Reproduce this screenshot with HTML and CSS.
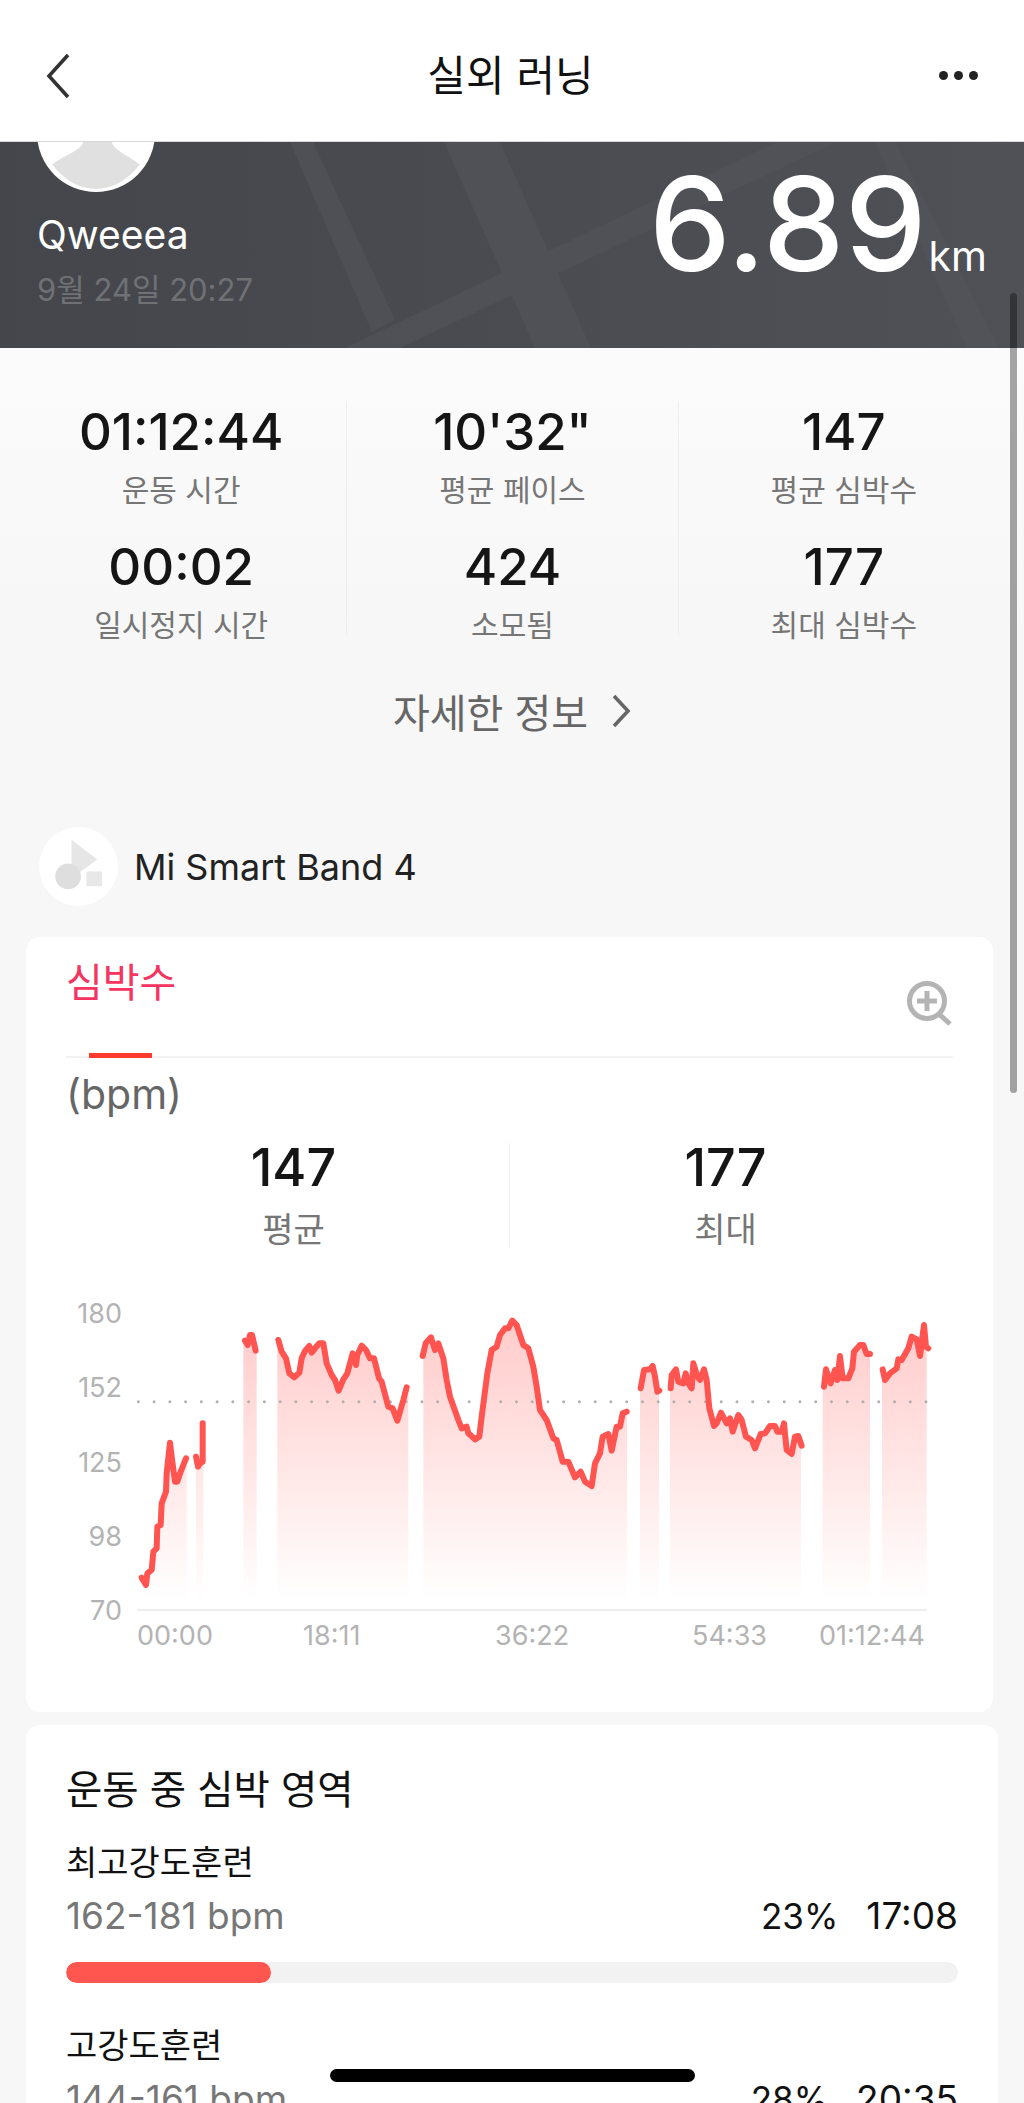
FILE: index.html
```html
<!DOCTYPE html>
<html lang="ko">
<head>
<meta charset="utf-8">
<title>실외 러닝</title>
<link rel="stylesheet" href="styles.css">
</head>
<body>
<div class="page">
  <nav class="nav">
    <svg class="nav-back" viewBox="0 0 26 46"><path d="M23 2 L4 23 L23 44" /></svg>
    <h1 class="nav-title">실외 러닝</h1>
    <div class="nav-more"><i></i><i></i><i></i></div>
  </nav>

  <header class="hero">
    <svg class="hero-map" viewBox="0 0 1024 206" preserveAspectRatio="none">
      <polygon points="290,0 313,0 395,178 372,190" />
      <polygon points="444,0 500,0 591,206 535,206" />
      <polygon points="345,206 777,0 836,0 400,206" />
      <polygon points="875,0 895,0 999,206 967,206" />
    </svg>
    <div class="hero-user">
      <svg class="avatar" viewBox="0 0 116 116">
        <circle cx="58" cy="58" r="58" fill="#ffffff"/>
        <path d="M45 40 H74 V68 C76 75 90 80 101 89 C90 104 74 113 58 113 C42 113 26 104 15 89 C26 80 43 75 45 68 Z" fill="#e0e0e0"/>
      </svg>
      <div class="hero-name">Qweeea</div>
      <div class="hero-date">9월 24일 20:27</div>
    </div>
    <div class="hero-dist"><span class="hero-num">6.89</span><span class="hero-unit">km</span></div>
  </header>

  <section class="stats">
    <div class="stat-col">
      <div class="stat-val">01:12:44</div><div class="stat-lab">운동 시간</div>
      <div class="stat-val stat-second">00:02</div><div class="stat-lab">일시정지 시간</div>
    </div>
    <div class="stat-col">
      <div class="stat-val">10'32"</div><div class="stat-lab">평균 페이스</div>
      <div class="stat-val stat-second">424</div><div class="stat-lab">소모됨</div>
    </div>
    <div class="stat-col stat-last">
      <div class="stat-val">147</div><div class="stat-lab">평균 심박수</div>
      <div class="stat-val stat-second">177</div><div class="stat-lab">최대 심박수</div>
    </div>
  </section>

  <div class="more-link">
    <span>자세한 정보</span>
    <svg class="more-chev" viewBox="0 0 20 34"><path d="M3 2 L17 17 L3 32"/></svg>
  </div>

  <div class="device">
    <svg class="device-icon" viewBox="0 0 80 80">
      <circle cx="40" cy="40" r="40" fill="#ffffff"/>
      <polygon points="33,13 59,33 33,52" fill="#e6e6e6"/>
      <circle cx="29.5" cy="50" r="13" fill="#dedede"/>
      <rect x="48" y="45" width="16" height="15" fill="#e8e8e8"/>
    </svg>
    <span class="device-name">Mi Smart Band 4</span>
  </div>

  <section class="card card-chart">
    <div class="tabs">
      <span class="tab-label">심박수</span>
      <i class="tab-mark"></i>
      <svg class="zoom-btn" viewBox="0 0 44 44"><circle cx="20" cy="20" r="17.5"/><path d="M20 10 V30 M10 20 H30"/><path class="zoom-handle" d="M32 33 L43 43"/></svg>
    </div>
    <div class="unit">(bpm)</div>
    <div class="summary">
      <div class="sum-col sum-first"><div class="sum-val">147</div><div class="sum-lab">평균</div></div>
      <div class="sum-col"><div class="sum-val">177</div><div class="sum-lab">최대</div></div>
    </div>
    <svg class="chart" viewBox="0 0 880 400">
      <defs>
        <linearGradient id="hr" gradientUnits="userSpaceOnUse" x1="0" y1="130" x2="0" y2="960">
          <stop offset="0" stop-color="#ff5450" stop-opacity=".3"/>
          <stop offset="1" stop-color="#ff5450" stop-opacity="0"/>
        </linearGradient>
      </defs>
      <g class="y-labels">
        <text x="62" y="43">180</text><text x="62" y="117">152</text><text x="62" y="192">125</text><text x="62" y="266">98</text><text x="62" y="340">70</text>
      </g>
      <g class="x-labels">
        <text x="77" y="365">00:00</text><text x="243" y="365">18:11</text><text x="435" y="365">36:22</text><text x="632" y="365">54:33</text><text x="759" y="365">01:12:44</text>
      </g>
      <line class="axis" x1="77" y1="330" x2="867" y2="330"/>
      <g transform="scale(.33333)">
        <g class="areas">
          <polygon points="245,893 258,915 262,880 275,870 280,815 290,805 292,740 302,735 305,670 318,635 320,580 330,488 335,530 345,605 352,605 360,580 380,535 380,960 245,960"/>
          <polygon points="408,530 414,560 420,550 430,545 430,430 430,960 408,960"/>
          <polygon points="550,182 563,195 570,165 576,165 590,212 590,960 550,960"/>
          <polygon points="652,180 665,215 678,235 688,280 703,292 718,278 725,235 735,213 748,198 755,218 765,205 778,190 790,190 800,250 815,285 825,300 836,332 850,298 862,280 878,220 888,255 892,225 905,197 918,210 930,235 942,235 957,295 965,305 985,380 998,385 1012,422 1030,360 1045,322 1045,960 652,960"/>
          <polygon points="1090,228 1097,190 1113,172 1125,210 1135,190 1150,235 1160,300 1170,350 1195,420 1205,445 1220,440 1225,460 1245,478 1258,470 1265,410 1282,280 1295,210 1310,200 1320,165 1335,145 1345,145 1357,122 1370,135 1390,195 1405,205 1420,260 1430,320 1440,390 1460,420 1480,475 1490,480 1508,545 1525,545 1545,592 1562,575 1575,605 1595,618 1605,550 1620,520 1628,470 1645,462 1655,512 1670,440 1680,440 1688,400 1701,395 1701,960 1090,960"/>
          <polygon points="1740,325 1752,270 1770,268 1778,258 1785,290 1792,335 1797,332 1797,960 1740,960"/>
          <polygon points="1830,325 1835,285 1848,268 1855,305 1870,310 1877,280 1885,310 1895,325 1900,250 1912,290 1920,300 1932,268 1940,300 1948,385 1962,438 1970,430 1983,398 2000,430 2010,415 2018,455 2035,405 2045,420 2058,470 2075,480 2085,505 2102,462 2115,460 2130,438 2145,438 2152,455 2165,455 2172,430 2180,510 2195,522 2205,470 2215,468 2223,497 2223,960 1830,960"/>
          <polygon points="2288,320 2298,268 2312,310 2325,270 2332,300 2340,228 2348,295 2365,295 2377,265 2382,215 2400,195 2410,195 2420,222 2430,222 2430,960 2288,960"/>
          <polygon points="2466,268 2475,300 2490,280 2510,265 2515,238 2525,240 2545,205 2555,170 2570,178 2580,228 2592,135 2598,200 2600,205 2600,960 2466,960"/>
        </g>
        <line class="dots" x1="235" y1="365" x2="2602" y2="365"/>
        <g class="lines">
          <polyline points="245,893 258,915 262,880 275,870 280,815 290,805 292,740 302,735 305,670 318,635 320,580 330,488 335,530 345,605 352,605 360,580 378,535"/>
          <polyline points="408,530 414,560 420,550 428,545 428,430"/>
          <polyline points="555,182 563,195 570,165 576,165 587,212"/>
          <polyline points="655,180 665,215 678,235 688,280 703,292 718,278 725,235 735,213 748,198 755,218 765,205 778,190 790,190 800,250 815,285 825,300 836,332 850,298 862,280 878,220 888,255 892,225 905,197 918,210 930,235 942,235 957,295 965,305 985,380 998,385 1012,422 1030,360 1040,322"/>
          <polyline points="1088,228 1097,190 1113,172 1125,210 1135,190 1150,235 1160,300 1170,350 1195,420 1205,445 1220,440 1225,460 1245,478 1258,470 1265,410 1282,280 1295,210 1310,200 1320,165 1335,145 1345,145 1357,122 1370,135 1390,195 1405,205 1420,260 1430,320 1440,390 1460,420 1480,475 1490,480 1508,545 1525,545 1545,592 1562,575 1575,605 1595,618 1605,550 1620,520 1628,470 1645,462 1655,512 1670,440 1680,440 1688,400 1700,395"/>
          <polyline points="1742,325 1752,270 1770,268 1778,258 1785,290 1792,335 1798,332"/>
          <polyline points="1832,325 1835,285 1848,268 1855,305 1870,310 1877,280 1885,310 1895,325 1900,250 1912,290 1920,300 1932,268 1940,300 1948,385 1962,438 1970,430 1983,398 2000,430 2010,415 2018,455 2035,405 2045,420 2058,470 2075,480 2085,505 2102,462 2115,460 2130,438 2145,438 2152,455 2165,455 2172,430 2180,510 2195,522 2205,470 2215,468 2225,497"/>
          <polyline points="2292,320 2298,268 2312,310 2325,270 2332,300 2340,228 2348,295 2365,295 2377,265 2382,215 2400,195 2410,195 2420,222 2430,222"/>
          <polyline points="2468,268 2475,300 2490,280 2510,265 2515,238 2525,240 2545,205 2555,170 2570,178 2580,228 2592,135 2598,200 2605,205"/>
        </g>
      </g>
    </svg>
  </section>

  <section class="card card-zones">
    <h2 class="zones-title">운동 중 심박 영역</h2>
    <div class="zone">
      <div class="zone-name">최고강도훈련</div>
      <div class="zone-row">
        <span class="zone-range">162-181 bpm</span>
        <span class="zone-nums"><span class="zone-pct">23%</span><span>17:08</span></span>
      </div>
      <div class="zone-bar"><div class="zone-fill" style="width:23%"></div></div>
    </div>
    <div class="zone">
      <div class="zone-name">고강도훈련</div>
      <div class="zone-row">
        <span class="zone-range">144-161 bpm</span>
        <span class="zone-nums"><span class="zone-pct">28%</span><span>20:35</span></span>
      </div>
    </div>
  </section>

  <div class="scrollbar"></div>
  <div class="home-bar"></div>
</div>
</body>
</html>
```
FILE: styles.css
```css
* { box-sizing: border-box; }
html, body { margin: 0; padding: 0; }
body {
  width: 1024px;
  height: 2103px;
  overflow: hidden;
  background: #f7f7f7;
  font-family: "Inter", "Noto Sans CJK KR", sans-serif;
  color: #111;
}
.page { position: relative; width: 1024px; height: 2103px; overflow: hidden; }

.nav {
  height: 142px;
  background: #fff;
  display: flex;
  align-items: center;
  justify-content: space-between;
  padding: 10px 46px 0 45px;
  border-bottom: 1px solid #d8d8d8;
  position: relative;
  z-index: 2;
}
.nav-back { width: 26px; height: 46px; margin-right: 11px; fill: none; stroke: #333; stroke-width: 3.6; }
.nav-title { margin: 0; font-size: 42px; line-height: 50px; font-weight: 400; color: #111; }
.nav-more { display: flex; gap: 6px; }
.nav-more i { width: 9px; height: 9px; border-radius: 50%; background: #222; }

.hero {
  height: 206px;
  background: linear-gradient(90deg, #44464b, #4f5156);
  position: relative;
  overflow: hidden;
  display: flex;
  justify-content: space-between;
  padding: 0 37px 0 37px;
}
.hero-map { position: absolute; left: 0; top: 0; width: 100%; height: 100%; fill: #54565b; opacity: .55; }
.hero-user, .hero-dist { position: relative; }
.avatar { display: block; width: 118px; height: 118px; margin-top: -68px; }
.hero-name { font-size: 39px; line-height: 48px; color: #fff; margin-top: 19px; }
.hero-date { font-size: 31px; line-height: 36px; color: #6f7175; margin-top: 13px; }
.hero-dist { display: flex; align-items: baseline; padding-top: 17px; }
.hero-num { font-size: 130px; line-height: 130px; font-weight: 500; color: #fff; }
.hero-unit { font-size: 41px; line-height: 42px; color: #fff; margin-left: 2px; }

.stats { display: flex; padding: 53px 15px 0 16px; height: 287px; background: linear-gradient(#fbfbfb, #f7f7f7); }
.stat-col { flex: 1; height: 234px; text-align: center; border-right: 1px solid #eeeeee; }
.stat-last { border-right: 0; }
.stat-val { font-size: 51px; line-height: 62px; font-weight: 500; color: #151515; }
.stat-second { margin-top: 19px; }
.stat-lab { font-size: 30px; line-height: 54px; color: #767676; }

.more-link {
  display: flex;
  justify-content: center;
  align-items: center;
  gap: 23px;
  height: 50px;
  margin-top: 51px;
  font-size: 40px;
  color: #666;
}
.more-chev { width: 20px; height: 34px; fill: none; stroke: #666; stroke-width: 3.6; }

.device { display: flex; align-items: center; gap: 16px; margin: 91px 0 31px 39px; height: 79px; }
.device-icon { width: 79px; height: 79px; }
.device-name { font-size: 36px; color: #222; }

.card { background: #fff; margin-left: 26px; border-radius: 14px; }
.card-chart { width: 967px; height: 775px; padding: 0 40px; }
.tabs { position: relative; height: 121px; border-bottom: 2px solid #f2f2f2; }
.tab-label { display: block; padding-top: 16px; font-size: 40px; line-height: 60px; color: #f5355f; }
.tab-mark { position: absolute; left: 23px; bottom: -2px; width: 63px; height: 5px; background: #ff3b30; }
.zoom-btn { position: absolute; right: 2px; top: 44px; width: 44px; height: 44px; fill: none; stroke: #b4b4b4; stroke-width: 5; overflow: visible; }

.unit { font-size: 41px; line-height: 72px; color: #666; }
.summary { display: flex; margin-top: 13px; padding: 0 12px; }
.sum-col { flex: 1; height: 104px; text-align: center; }
.sum-first { border-right: 1px solid #eeeeee; }
.sum-val { font-size: 52px; line-height: 50px; font-weight: 500; color: #151515; }
.sum-lab { font-size: 34px; line-height: 34px; color: #767676; margin-top: 20px; }

.chart { display: block; width: 880px; height: 400px; margin: 33px 0 0 -6px; }
.chart text { font-family: "Inter", sans-serif; font-size: 27px; fill: #b3b3b3; }
.y-labels text { text-anchor: end; }
.axis { stroke: #eeeeee; stroke-width: 2; }
.areas polygon { fill: url(#hr); }
.dots { stroke: #b0b0b0; stroke-width: 9; stroke-linecap: round; stroke-dasharray: 0 47.26; }
.lines polyline { fill: none; stroke: #ff5450; stroke-width: 18; stroke-linejoin: round; stroke-linecap: round; }

.card-zones { width: 972px; margin-top: 13px; height: 500px; padding: 40px; }
.zones-title { margin: 0 0 26px; font-size: 39.5px; line-height: 50px; font-weight: 400; color: #111; }
.zone-name { font-size: 34px; line-height: 44px; color: #111; }
.zone-row { display: flex; justify-content: space-between; align-items: center; margin-top: 9px; height: 44px; font-size: 37px; line-height: 44px; }
.zone-range { color: #777; }
.zone-nums { display: flex; gap: 28px; color: #111; }
.zone-pct { font-size: 35px; }
.zone-bar { height: 21px; margin: 24px 0 41px; background: #f2f2f2; border-radius: 11px; overflow: hidden; }
.zone-fill { height: 100%; background: #ff5650; border-radius: 11px; }

.scrollbar { position: absolute; left: 1010px; top: 293px; width: 7px; height: 800px; border-radius: 4px; background: rgba(0,0,0,.35); }
.home-bar { position: absolute; left: 330px; top: 2069px; width: 365px; height: 13px; border-radius: 7px; background: #000; }
```
